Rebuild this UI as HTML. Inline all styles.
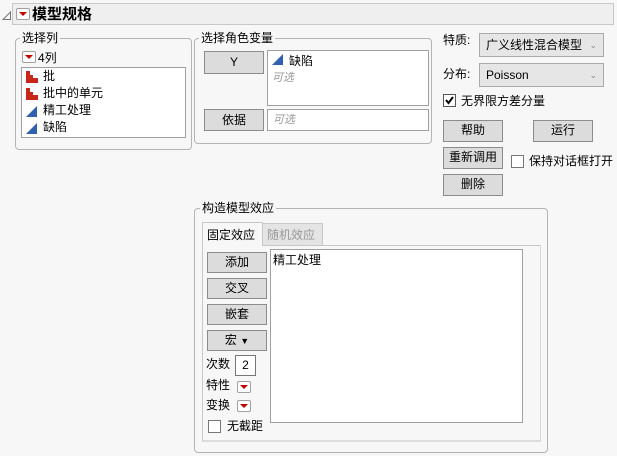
<!DOCTYPE html>
<html><head><meta charset="utf-8"><style>
*{box-sizing:border-box;margin:0;padding:0}
body{width:617px;height:456px;background:#f7f7f7;font-family:"Liberation Sans","Noto Sans CJK SC",sans-serif;font-size:12px;color:#000;position:relative;overflow:hidden}
.a{position:absolute}
.grp{position:absolute;border:1px solid #b4b4b4;border-radius:4px}
.lbl{position:absolute;background:#f7f7f7;padding:0 2px;font-size:12px;line-height:14px}
.btn{position:absolute;background:#dcdcdc;border:1px solid #8c8c8c;text-align:center;font-size:12px;line-height:19px}
.box{position:absolute;background:#fff;border:1px solid #a0a0a0}
.dd{position:absolute;width:14px;height:12px;border:1px solid #a0a0a0;background:#fff;border-radius:2px}
.dd:after{content:"";position:absolute;left:2px;top:3px;border-left:4px solid transparent;border-right:4px solid transparent;border-top:4px solid #c00000}
.cb{position:absolute;width:13px;height:13px;border:1px solid #555;background:#fff}
.t{position:absolute;line-height:14px;white-space:nowrap}
</style></head><body>
<div class="a" style="left:12px;top:3px;width:602px;height:22px;border:1px solid #c8c8c8;background:#efefef"></div>
<svg class="a" style="left:2px;top:11px" width="10" height="10"><path d="M8.5 1 L8.5 8.5 L1 8.5 Z" fill="none" stroke="#777"/></svg>
<div class="dd" style="left:16px;top:8px"></div>
<div class="t" style="left:32px;top:6px;font-size:15px;font-weight:bold;line-height:17px">模型规格</div>

<div class="grp" style="left:15px;top:38px;width:177px;height:112px"></div>
<div class="lbl" style="left:20px;top:31px">选择列</div>
<div class="dd" style="left:22px;top:51px"></div>
<div class="t" style="left:38px;top:51px">4列</div>
<div class="box" style="left:21px;top:67px;width:165px;height:71px"></div>
<svg class="a" style="left:26px;top:70px" width="13" height="65">
<g fill="#c8261a"><rect x="0" y="1" width="4" height="12"/><rect x="4" y="5" width="3" height="8"/><rect x="7" y="8" width="5" height="5"/>
<rect x="0" y="18" width="4" height="12"/><rect x="4" y="22" width="3" height="8"/><rect x="7" y="25" width="5" height="5"/></g>
<path d="M0 47 L11 36 L11 47 Z" fill="#3060b0"/><path d="M0 64 L11 53 L11 64 Z" fill="#3060b0"/></svg>
<div class="t" style="left:43px;top:69px">批</div>
<div class="t" style="left:43px;top:86px">批中的单元</div>
<div class="t" style="left:43px;top:103px">精工处理</div>
<div class="t" style="left:43px;top:120px">缺陷</div>

<div class="grp" style="left:194px;top:38px;width:238px;height:106px"></div>
<div class="lbl" style="left:199px;top:31px">选择角色变量</div>
<div class="btn" style="left:204px;top:51px;width:60px;height:23px;line-height:21px">Y</div>
<div class="box" style="left:267px;top:50px;width:162px;height:56px"></div>
<svg class="a" style="left:272px;top:54px" width="12" height="12"><path d="M0 11 L11 0 L11 11 Z" fill="#3060b0"/></svg>
<div class="t" style="left:289px;top:54px">缺陷</div>
<div class="t" style="left:272px;top:71px;color:#999;font-style:italic;font-size:11px">可选</div>
<div class="btn" style="left:204px;top:109px;width:60px;height:22px;line-height:20px">依据</div>
<div class="box" style="left:267px;top:109px;width:162px;height:22px"></div>
<div class="t" style="left:273px;top:113px;color:#999;font-style:italic;font-size:11px">可选</div>

<div class="t" style="left:443px;top:33px">特质:</div>
<div class="btn" style="left:479px;top:33px;width:125px;height:24px;line-height:22px;text-align:left;padding-left:6px;background:#e6e6e6;border-color:#aaa">广义线性混合模型<span style="position:absolute;right:6px;color:#888;font-size:9px">⌄</span></div>
<div class="t" style="left:443px;top:67px">分布:</div>
<div class="btn" style="left:479px;top:63px;width:125px;height:24px;line-height:22px;text-align:left;padding-left:6px;background:#e6e6e6;border-color:#aaa">Poisson<span style="position:absolute;right:6px;color:#888;font-size:9px">⌄</span></div>
<div class="cb" style="left:443px;top:94px"><svg width="11" height="11" style="position:absolute;left:0;top:0"><path d="M2 5 L4.5 8 L9 2" stroke="#000" stroke-width="2" fill="none"/></svg></div>
<div class="t" style="left:461px;top:94px">无界限方差分量</div>
<div class="btn" style="left:443px;top:120px;width:60px;height:22px">帮助</div>
<div class="btn" style="left:533px;top:120px;width:60px;height:22px">运行</div>
<div class="btn" style="left:443px;top:147px;width:60px;height:22px">重新调用</div>
<div class="cb" style="left:511px;top:155px;border-color:#777"></div>
<div class="t" style="left:529px;top:154px">保持对话框打开</div>
<div class="btn" style="left:443px;top:174px;width:60px;height:22px">删除</div>

<div class="grp" style="left:194px;top:208px;width:354px;height:245px"></div>
<div class="lbl" style="left:200px;top:201px">构造模型效应</div>
<div class="a" style="left:202px;top:245px;width:339px;height:197px;border:1px solid #c8c8c8;border-right-color:#d8d8d8;border-bottom:2px solid #ddd"></div>
<div class="a" style="left:262px;top:223px;width:61px;height:23px;border:1px solid #c8c8c8;background:#e4e4e4"></div>
<div class="t" style="left:267px;top:228px;color:#999">随机效应</div>
<div class="a" style="left:202px;top:222px;width:61px;height:24px;border:1px solid #c8c8c8;border-bottom:none;background:#f7f7f7"></div>
<div class="t" style="left:207px;top:228px">固定效应</div>
<div class="box" style="left:270px;top:249px;width:253px;height:174px"></div>
<div class="t" style="left:273px;top:253px">精工处理</div>
<div class="btn" style="left:207px;top:252px;width:60px;height:21px">添加</div>
<div class="btn" style="left:207px;top:278px;width:60px;height:21px">交叉</div>
<div class="btn" style="left:207px;top:304px;width:60px;height:21px">嵌套</div>
<div class="btn" style="left:207px;top:330px;width:60px;height:21px">宏 <span style="font-size:9px">▼</span></div>
<div class="t" style="left:206px;top:357px">次数</div>
<div class="box" style="left:235px;top:355px;width:21px;height:21px;border-color:#777;text-align:center;line-height:18px">2</div>
<div class="t" style="left:206px;top:378px">特性</div>
<div class="dd" style="left:237px;top:381px"></div>
<div class="t" style="left:206px;top:398px">变换</div>
<div class="dd" style="left:237px;top:400px"></div>
<div class="cb" style="left:208px;top:420px;border-color:#777"></div>
<div class="t" style="left:227px;top:419px">无截距</div>
</body></html>
